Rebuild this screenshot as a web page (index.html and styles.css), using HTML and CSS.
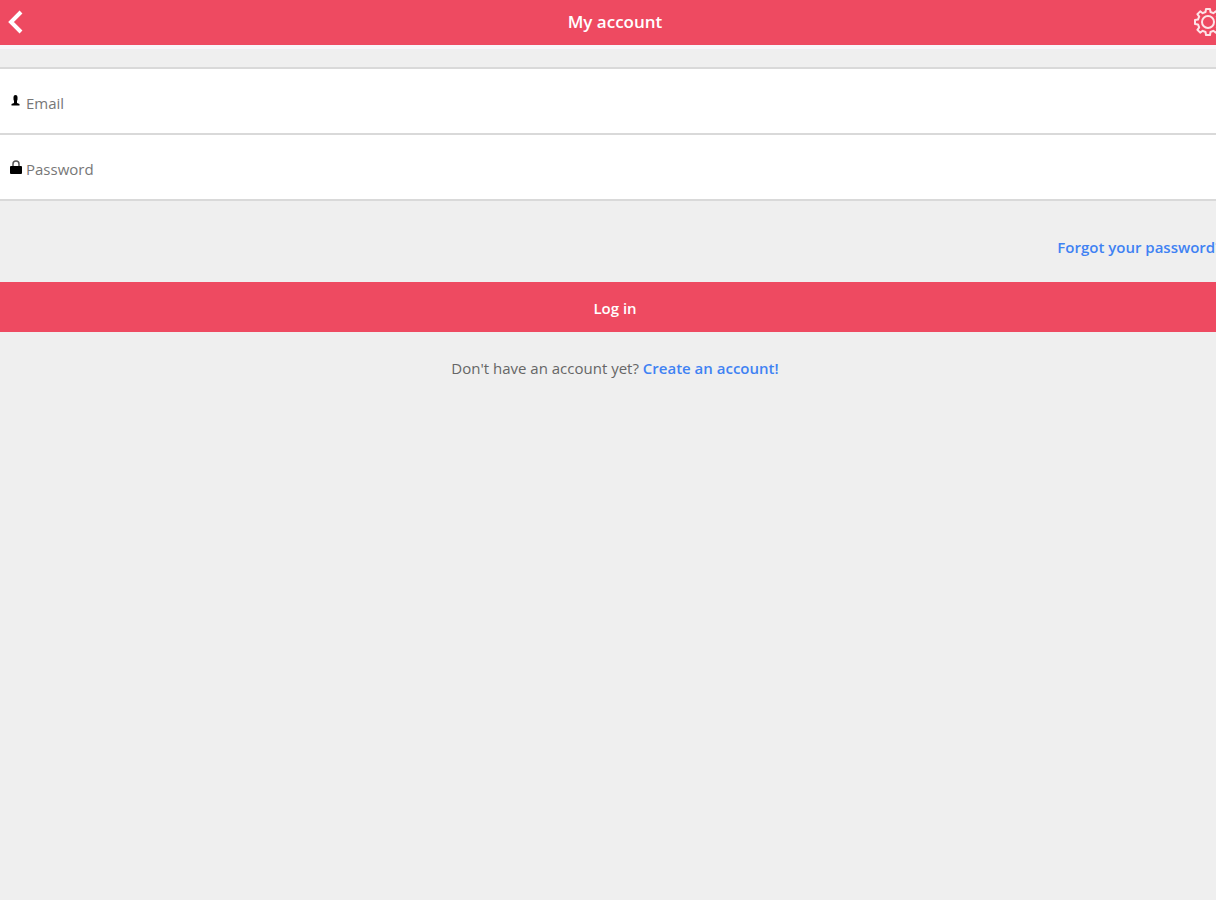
FILE: index.html
```html
<!DOCTYPE html>
<html lang="en">
<head>
    <meta charset="UTF-8">
    <meta name="viewport" content="width=device-width, initial-scale=1.0">
    <title>My account</title>
    <link rel="stylesheet" href="styles.css">
</head>
<body>

<div class="app">
    <header class="header">
        <button type="button" class="icon-button" aria-label="Back">
            <svg width="16" height="24" viewBox="0 0 16 24" fill="none" stroke="#fff" stroke-width="4">
                <path d="M13 2L3 12l10 10"/>
            </svg>
        </button>
        <h1>My account</h1>
        <button type="button" class="icon-button" aria-label="Settings">
            <svg width="28" height="28" viewBox="0 0 28 28" fill="none" stroke="#fff" stroke-opacity="0.85" stroke-width="2" stroke-linejoin="round">
                <path d="M11.500 4 L12 1 H16 L16.500 4 L19.300 5.200 L21.800 3.400 L24.600 6.200 L22.800 8.700 L24 11.500 L27 12 V16 L24 16.500 L22.800 19.300 L24.600 21.800 L21.800 24.600 L19.300 22.800 L16.500 24 L16 27 H12 L11.500 24 L8.700 22.800 L6.200 24.600 L3.400 21.800 L5.200 19.300 L4 16.500 L1 16 V12 L4 11.500 L5.200 8.700 L3.400 6.200 L6.200 3.400 L8.700 5.200 Z"/>
                <circle cx="14" cy="14" r="6"/>
            </svg>
        </button>
    </header>

    <form class="login-form">
        <div class="fields">
            <div class="field">
                <label for="email" aria-label="Email">
                    <svg width="12" height="14" viewBox="0 0 12 14">
                        <path d="M5.500 1a2 2 0 0 1 2 2v2.500L7 7v2l2.500 1v1.500h-8V10L4 9V7l-.5-1.500V3a2 2 0 0 1 2-2z"/>
                    </svg>
                </label>
                <input type="email" id="email" placeholder="Email">
            </div>
            <div class="field">
                <label for="password" aria-label="Password">
                    <svg width="12" height="14" viewBox="0 0 12 14">
                        <path d="M3 7V4a3 3 0 0 1 6 0v3" fill="none" stroke="#555" stroke-width="1.500"/>
                        <rect y="6" width="12" height="8" rx="1"/>
                    </svg>
                </label>
                <input type="password" id="password" placeholder="Password">
            </div>
        </div>
        <a href="#" class="forgot">Forgot your password?</a>
        <button type="submit" class="login-button">Log in</button>
    </form>

    <p class="signup">Don't have an account yet? <a href="#">Create an account!</a></p>
</div>

</body>
</html>
```

FILE: styles.css
```css
* {
    box-sizing: border-box;
}
body {
    margin: 0;
    background-color: #efefef;
    color: #666;
    font-family: "Open Sans", "Noto Sans", sans-serif;
    font-size: 15px;
    line-height: 20px;
    overflow-x: hidden;
}
/* runs slightly past the right edge of the window */
.app {
    width: calc(100% + 14px);
}
.header {
    display: flex;
    align-items: center;
    justify-content: space-between;
    height: 49px;
    padding: 0 8px 1px;
    background-color: #ee4a61;
    border-bottom: 4px solid #f8f5f8;
}
.header h1 {
    margin: 0;
    color: #fff;
    font-size: 17px;
    font-weight: 600;
}
.icon-button {
    display: flex;
    width: 28px;
    padding: 0;
    background: none;
    border: 0;
    cursor: pointer;
}
.login-form {
    display: flex;
    flex-direction: column;
    padding-top: 18px;
}
.fields {
    border-top: 2px solid #d9d9d9;
}
.field {
    display: flex;
    align-items: center;
    gap: 4px;
    height: 66px;
    padding-left: 10px;
    background-color: #fff;
    border-bottom: 2px solid #d9d9d9;
}
.field label {
    display: flex;
}
.field input {
    flex: 1;
    height: 100%;
    padding: 4px 0 0;
    background: none;
    border: 0;
    outline: 0;
    color: #444;
    font: inherit;
}
.field input::placeholder {
    color: #777;
    opacity: 1;
}
.forgot {
    align-self: flex-end;
    margin: 36px 8px 25px;
}
.forgot,
.signup a {
    color: #3f82f3;
    font-weight: 600;
    text-decoration: none;
}
.login-button {
    height: 50px;
    padding: 2px 0 0;
    background-color: #ee4a61;
    border: 0;
    color: #fff;
    font: inherit;
    font-weight: 600;
    cursor: pointer;
}
.signup {
    margin: 26px 0;
    text-align: center;
}
```
